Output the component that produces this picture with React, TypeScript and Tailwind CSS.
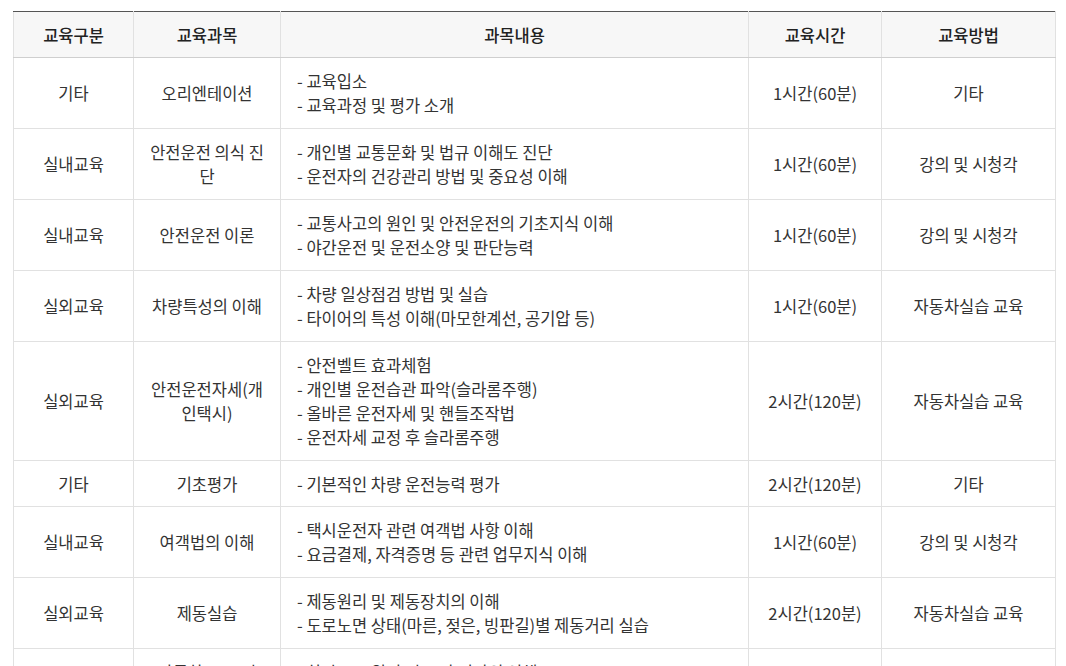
const rows = [
  { type: "기타", subject: "오리엔테이션", content: ["- 교육입소", "- 교육과정 및 평가 소개"], time: "1시간(60분)", method: "기타" },
  { type: "실내교육", subject: "안전운전 의식 진단", content: ["- 개인별 교통문화 및 법규 이해도 진단", "- 운전자의 건강관리 방법 및 중요성 이해"], time: "1시간(60분)", method: "강의 및 시청각" },
  { type: "실내교육", subject: "안전운전 이론", content: ["- 교통사고의 원인 및 안전운전의 기초지식 이해", "- 야간운전 및 운전소양 및 판단능력"], time: "1시간(60분)", method: "강의 및 시청각" },
  { type: "실외교육", subject: "차량특성의 이해", content: ["- 차량 일상점검 방법 및 실습", "- 타이어의 특성 이해(마모한계선, 공기압 등)"], time: "1시간(60분)", method: "자동차실습 교육" },
  { type: "실외교육", subject: "안전운전자세(개인택시)", content: ["- 안전벨트 효과체험", "- 개인별 운전습관 파악(슬라롬주행)", "- 올바른 운전자세 및 핸들조작법", "- 운전자세 교정 후 슬라롬주행"], time: "2시간(120분)", method: "자동차실습 교육" },
  { type: "기타", subject: "기초평가", content: ["- 기본적인 차량 운전능력 평가"], time: "2시간(120분)", method: "기타" },
  { type: "실내교육", subject: "여객법의 이해", content: ["- 택시운전자 관련 여객법 사항 이해", "- 요금결제, 자격증명 등 관련 업무지식 이해"], time: "1시간(60분)", method: "강의 및 시청각" },
  { type: "실외교육", subject: "제동실습", content: ["- 제동원리 및 제동장치의 이해", "- 도로노면 상태(마른, 젖은, 빙판길)별 제동거리 실습"], time: "2시간(120분)", method: "자동차실습 교육" },
  { type: "실내교육", subject: "자동차 구조 및 정비", content: ["- 차량 구조원리 및 고장 진단의 이해", "- 기본 정비요령 이해"], time: "1시간(60분)", method: "강의 및 시청각" },
];

export default function App() {
  return (
    <div
      className="w-[1066px] h-[666px] overflow-hidden bg-white pt-[11px] pl-[13px] text-[16.5px] leading-[24px] text-[#333]"
      style={{ fontFamily: '"Noto Sans CJK KR", "Noto Sans", sans-serif' }}
    >
      <table className="w-[1042px] table-fixed border-collapse border-t border-t-[#555]">
        <colgroup>
          <col className="w-[120px]" />
          <col className="w-[147px]" />
          <col className="w-[468px]" />
          <col className="w-[133px]" />
          <col className="w-[174px]" />
        </colgroup>
        <thead>
          <tr className="bg-[#f7f7f7]">
            {["교육구분", "교육과목", "과목내용", "교육시간", "교육방법"].map((h) => (
              <th
                key={h}
                className="border border-[#e1e1e1] border-t-[#555] border-b-[#cfcfcf] px-[15px] py-[10.5px] font-medium text-center text-[#222]"
              >
                {h}
              </th>
            ))}
          </tr>
        </thead>
        <tbody>
          {rows.map((r, i) => {
            // single-line rows come out a pixel taller than the reference
            const py = r.content.length === 1 ? "py-[10.5px]" : "py-[11px]";
            const cell = `border border-[#e1e1e1] px-[15px] text-center align-middle ${py}`;
            return (
              <tr key={i}>
                <td className={cell}>{r.type}</td>
                <td className={cell}>{r.subject}</td>
                <td className={`border border-[#e1e1e1] pl-[16px] pr-[15px] text-left align-middle ${py}`}>
                  {r.content.map((c) => (
                    <div key={c}>{c}</div>
                  ))}
                </td>
                <td className={cell}>{r.time}</td>
                <td className={cell}>{r.method}</td>
              </tr>
            );
          })}
        </tbody>
      </table>
    </div>
  );
}
